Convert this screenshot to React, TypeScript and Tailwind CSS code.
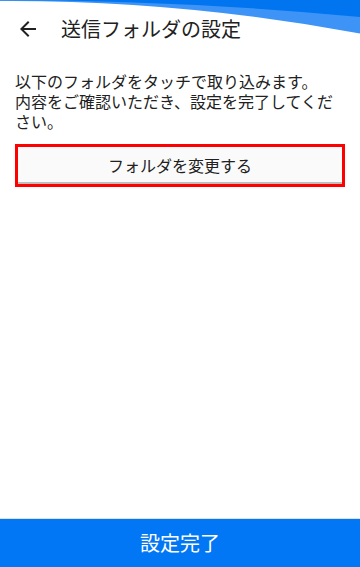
import React from 'react';

function BackArrow() {
  return (
    <svg width="24" height="24" viewBox="0 0 24 24" className="shrink-0 text-[#212121]" fill="currentColor">
      <path d="M20 11H7.83l5.59-5.59L12 4l-8 8 8 8 1.41-1.41L7.83 13H20v-2z" />
    </svg>
  );
}

function TopWave() {
  return (
    <svg
      className="pointer-events-none absolute left-0 top-0"
      width="360"
      height="40"
      viewBox="0 0 360 40"
    >
      <path d="M0 0 H360 V33.5 Q180 0 0 1 Z" fill="#3d94f6" />
      <path d="M0 0 H360 V17 Q180 0 0 0 Z" fill="#0075ef" />
    </svg>
  );
}

export default function App() {
  return (
    <div className="relative flex h-[567px] w-[360px] flex-col overflow-hidden bg-white font-['Noto_Sans_CJK_JP','Noto_Sans',sans-serif] text-[#212121]">
      <TopWave />

      {/* header */}
      <header className="flex h-[57px] items-center pl-4">
        <BackArrow />
        <h1 className="ml-[21px] text-[20px] leading-none font-normal">送信フォルダの設定</h1>
      </header>

      {/* content */}
      <main className="flex-1 px-[15px]">
        <p className="pt-[14px] text-[16px] leading-[20px]">
          以下のフォルダをタッチで取り込みます。
          <br />
          内容をご確認いただき、設定を完了してください。
        </p>

        <div className="mt-[13px] border-[3px] border-[#ff0000]">
          <button className="flex h-[37px] w-full items-center justify-center border-b-2 border-[#bdbdbd] bg-[#fafafa] text-[16px] text-[#212121]">
            フォルダを変更する
          </button>
        </div>
      </main>

      {/* bottom action */}
      <footer className="border-t border-[#e0e0e0]">
        <button className="flex h-[48px] w-full items-center justify-center bg-[#0277f5] text-[20px] text-white">
          設定完了
        </button>
      </footer>
    </div>
  );
}
